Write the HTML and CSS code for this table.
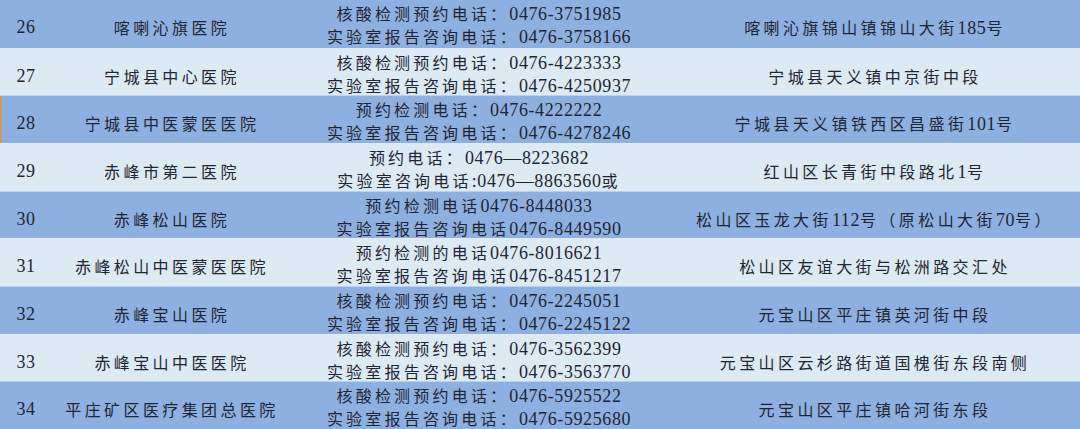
FILE: index.html
```html
<!DOCTYPE html>
<html lang="zh-CN">
<head>
<meta charset="utf-8">
<link rel="stylesheet" href="styles.css">
</head>
<body>
<div class="table">
  <div class="row blue">
    <div class="c no"><span class="t n">26</span></div>
    <div class="c name"><span class="t">喀喇沁旗医院</span></div>
    <div class="c phone"><div class="lines"><div class="ln">核酸检测预约电话：<span class="n">0476-3751985</span></div><div class="ln">实验室报告咨询电话：<span class="n">0476-3758166</span></div></div></div>
    <div class="c addr"><span class="t">喀喇沁旗锦山镇锦山大街<span class="n">185</span>号</span></div>
  </div>
  <div class="row light">
    <div class="c no"><span class="t n">27</span></div>
    <div class="c name"><span class="t">宁城县中心医院</span></div>
    <div class="c phone"><div class="lines"><div class="ln">核酸检测预约电话：<span class="n">0476-4223333</span></div><div class="ln">实验室报告咨询电话：<span class="n">0476-4250937</span></div></div></div>
    <div class="c addr"><span class="t">宁城县天义镇中京街中段</span></div>
  </div>
  <div class="row blue marked">
    <div class="c no"><span class="t n">28</span></div>
    <div class="c name"><span class="t">宁城县中医蒙医医院</span></div>
    <div class="c phone"><div class="lines"><div class="ln">预约检测电话：<span class="n">0476-4222222</span></div><div class="ln">实验室报告咨询电话：<span class="n">0476-4278246</span></div></div></div>
    <div class="c addr"><span class="t">宁城县天义镇铁西区昌盛街<span class="n">101</span>号</span></div>
  </div>
  <div class="row light">
    <div class="c no"><span class="t n">29</span></div>
    <div class="c name"><span class="t">赤峰市第二医院</span></div>
    <div class="c phone"><div class="lines"><div class="ln">预约电话：<span class="n">0476—8223682</span></div><div class="ln">实验室咨询电话<span class="n">:0476—8863560</span>或</div></div></div>
    <div class="c addr"><span class="t">红山区长青街中段路北<span class="n">1</span>号</span></div>
  </div>
  <div class="row blue">
    <div class="c no"><span class="t n">30</span></div>
    <div class="c name"><span class="t">赤峰松山医院</span></div>
    <div class="c phone"><div class="lines"><div class="ln">预约检测电话<span class="n">0476-8448033</span></div><div class="ln">实验室报告咨询电话<span class="n">0476-8449590</span></div></div></div>
    <div class="c addr"><span class="t">松山区玉龙大街<span class="n">112</span>号（原松山大街<span class="n">70</span>号）</span></div>
  </div>
  <div class="row light">
    <div class="c no"><span class="t n">31</span></div>
    <div class="c name"><span class="t">赤峰松山中医蒙医医院</span></div>
    <div class="c phone"><div class="lines"><div class="ln">预约检测的电话<span class="n">0476-8016621</span></div><div class="ln">实验室报告咨询电话<span class="n">0476-8451217</span></div></div></div>
    <div class="c addr"><span class="t">松山区友谊大街与松洲路交汇处</span></div>
  </div>
  <div class="row blue">
    <div class="c no"><span class="t n">32</span></div>
    <div class="c name"><span class="t">赤峰宝山医院</span></div>
    <div class="c phone"><div class="lines"><div class="ln">核酸检测预约电话：<span class="n">0476-2245051</span></div><div class="ln">实验室报告咨询电话：<span class="n">0476-2245122</span></div></div></div>
    <div class="c addr"><span class="t">元宝山区平庄镇英河街中段</span></div>
  </div>
  <div class="row light">
    <div class="c no"><span class="t n">33</span></div>
    <div class="c name"><span class="t">赤峰宝山中医医院</span></div>
    <div class="c phone"><div class="lines"><div class="ln">核酸检测预约电话：<span class="n">0476-3562399</span></div><div class="ln">实验室报告咨询电话：<span class="n">0476-3563770</span></div></div></div>
    <div class="c addr"><span class="t">元宝山区云杉路街道国槐街东段南侧</span></div>
  </div>
  <div class="row blue">
    <div class="c no"><span class="t n">34</span></div>
    <div class="c name"><span class="t">平庄矿区医疗集团总医院</span></div>
    <div class="c phone"><div class="lines"><div class="ln">核酸检测预约电话：<span class="n">0476-5925522</span></div><div class="ln">实验室报告咨询电话：<span class="n">0476-5925680</span></div></div></div>
    <div class="c addr"><span class="t">元宝山区平庄镇哈河街东段</span></div>
  </div>
</div>
</body>
</html>
```

FILE: styles.css
```css
html, body {
  margin: 0;
  padding: 0;
}
body {
  width: 1080px;
  height: 429px;
  overflow: hidden;
  background: #8db0e0;
  font-family: "Noto Sans CJK SC", "Noto Sans", sans-serif;
  font-size: 16px;
  color: #1f2633;
}
.table {
  display: flex;
  flex-direction: column;
}
.row {
  display: grid;
  grid-template-columns: 52px 240px 374px 1fr;
  height: calc(429px / 9);
  box-sizing: border-box;
  border-top: 1px solid rgba(225, 236, 248, 0.55);
}
.row:first-child {
  border-top: none;
}
.blue {
  background: #8db0e0;
}
.light {
  background: #dbeaf3;
}
.marked {
  box-shadow: inset 2px 0 0 #c29c72;
}
.c {
  display: flex;
  justify-content: center;
  align-items: center;
  text-align: center;
  letter-spacing: 3.4px;
  padding-top: 6px;
  box-sizing: border-box;
  white-space: nowrap;
  min-width: 0;
}
.t {
  display: block;
  line-height: 24px;
  height: 24px;
}
.phone {
  padding-top: 2px;
  letter-spacing: 3.2px;
}
.lines {
  display: flex;
  flex-direction: column;
  align-items: center;
}
.ln {
  height: 23px;
  line-height: 23px;
}
.addr {
  padding-left: 4px;
}
.n {
  font-family: "Liberation Serif", serif;
  font-size: 18px;
  letter-spacing: 0.6px;
  line-height: 1;
}
.t.n {
  line-height: 24px;
}
```
